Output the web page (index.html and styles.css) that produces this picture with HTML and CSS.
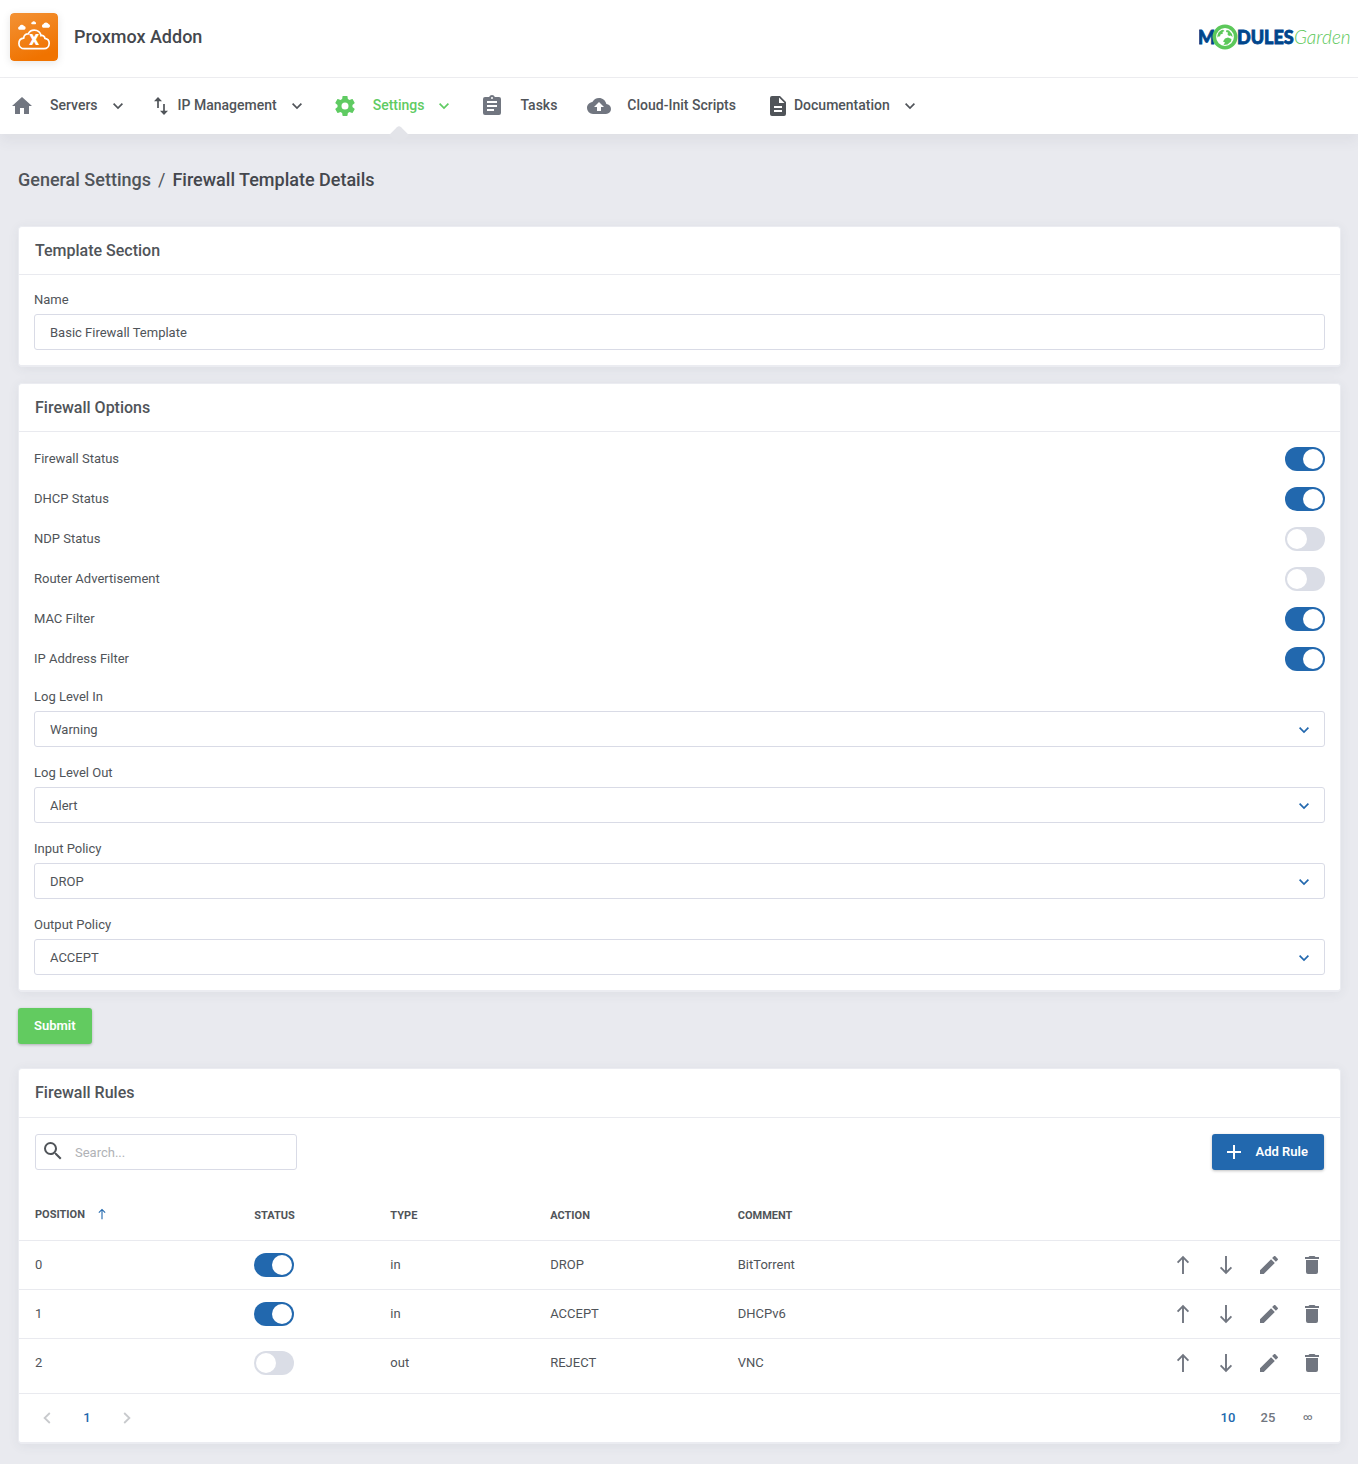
FILE: index.html
```html
<!DOCTYPE html>
<html lang="en">
<head>
    <meta charset="UTF-8">
    <meta name="viewport" content="width=device-width, initial-scale=1.0">
    <title>Proxmox Addon - Firewall Template Details</title>
    <link rel="stylesheet" href="styles.css">
</head>
<body>

<!-- icons used more than once -->
<svg class="sprite" aria-hidden="true">
    <symbol id="chevron" viewBox="0 0 12 12"><path d="M1.6 3.7L6 8L10.4 3.7" fill="none" stroke="currentColor" stroke-width="1.7"/></symbol>
    <symbol id="arrow-up" viewBox="0 0 24 24"><path d="M12 21V4.5M6.6 9.6L12 4.2L17.4 9.6" fill="none" stroke="currentColor" stroke-width="1.9"/></symbol>
    <symbol id="arrow-down" viewBox="0 0 24 24"><path d="M12 3V19.5M6.6 14.4L12 19.8L17.4 14.4" fill="none" stroke="currentColor" stroke-width="1.9"/></symbol>
    <symbol id="pencil" viewBox="0 0 24 24"><path d="M20.71,7.04C21.1,6.65 21.1,6 20.71,5.63L18.37,3.29C18,2.9 17.35,2.9 16.96,3.29L15.12,5.12L18.87,8.87M3,17.25V21H6.75L17.81,9.93L14.06,6.18L3,17.25Z"/></symbol>
    <symbol id="trash" viewBox="0 0 24 24"><path d="M19,4H15.5L14.5,3H9.5L8.5,4H5V6H19M6,19A2,2 0 0,0 8,21H16A2,2 0 0,0 18,19V7H6V19Z"/></symbol>
</svg>

<header class="top-bar">
    <svg class="app-icon" viewBox="0 0 48 48" aria-hidden="true">
        <defs>
            <linearGradient id="orange" x1="0" y1="0" x2="0.4" y2="1">
                <stop offset="0" stop-color="#f39235"/>
                <stop offset="1" stop-color="#f07300"/>
            </linearGradient>
        </defs>
        <rect width="48" height="48" rx="4" fill="url(#orange)"/>
        <path d="M14.5 35.7C11 35.7 8.9 33.2 8.9 30.4C8.9 27.6 10.9 25.4 13.7 25.1C13.8 22.4 15.8 20.7 18.2 20.9C19.4 18.4 21.6 17.1 24.2 17.1C27.8 17.1 30.5 19.6 31 22.6C32.6 22 34.8 23.2 34.9 25.3C37.4 25.7 39.2 27.8 39.2 30.3C39.2 33.3 37 35.7 34 35.7Z" fill="none" stroke="#fff" stroke-width="1.7"/>
        <path d="M9.4 16.8a1.7 1.7 0 0 1 0-3.3a2.5 2.5 0 0 1 4.6-.4a1.9 1.9 0 0 1 .3 3.7z" fill="#fff"/>
        <path d="M22.2 11.2a1 1 0 0 1 0-2a1.7 1.7 0 0 1 3.1-.1a1.1 1.1 0 0 1 0 2.1z" fill="#fff"/>
        <path d="M33.3 14.8a1.8 1.8 0 0 1 0-3.5a2.9 2.9 0 0 1 5.3-.3a2 2 0 0 1 .1 3.8z" fill="#fff"/>
        <text class="app-icon-letter" x="24" y="32" text-anchor="middle">x</text>
    </svg>
    <h1 class="app-title">Proxmox Addon</h1>
    <a class="brand" href="#" aria-label="ModulesGarden">
        <svg width="151" height="28" viewBox="0 0 151 28" aria-hidden="true">
            <text class="brand-bold" x="-1" y="21">M</text>
            <text class="brand-bold" x="38" y="21">DULES</text>
            <text class="brand-thin" x="95" y="21">Garden</text>
            <circle cx="26" cy="14" r="10.7" fill="#fff" stroke="#5cc85a" stroke-width="3.6"/>
            <path d="M18.5 14.5C18 10.5 20.5 7.5 24 6.8L25.5 8L23.5 9L24 10.5L21.5 11.5L21 13.5L19.8 13.2Z" fill="#5cc85a"/>
            <path d="M27.5 7L30 7.6L33 11L33.6 14L31.5 12.5L30 13L28.5 11.5L29 9.5L27 9Z" fill="#5cc85a"/>
            <path d="M26 15.5L29 14.5L32.5 16L32 18.5L28.5 21.6L24.5 22L26 19.5L24 18.5Z" fill="#5cc85a"/>
        </svg>
    </a>
</header>

<nav class="main-nav">
    <a class="nav-link" href="#">
        <svg class="icon nav-icon" viewBox="0 0 24 24"><path d="M10,20V14H14V20H19V12H22L12,3L2,12H5V20H10Z"/></svg>
        <span class="nav-text">Servers</span>
        <svg class="chevron"><use href="#chevron"/></svg>
    </a>
    <a class="nav-link nav-link-tight" href="#">
        <svg class="icon-ip" viewBox="0 0 20 24"><path d="M4 14V5M10 10V19" fill="none" stroke="currentColor" stroke-width="1.7"/><path d="M4 3L8 7.3H0ZM10 21L14 16.7H6Z"/></svg>
        <span class="nav-text">IP Management</span>
        <svg class="chevron"><use href="#chevron"/></svg>
    </a>
    <a class="nav-link active" href="#">
        <svg class="icon nav-icon" viewBox="0 0 24 24"><path d="M12,15.5A3.5,3.5 0 0,1 8.5,12A3.5,3.5 0 0,1 12,8.5A3.5,3.5 0 0,1 15.5,12A3.5,3.5 0 0,1 12,15.5M19.43,12.97C19.47,12.65 19.5,12.33 19.5,12C19.5,11.67 19.47,11.34 19.43,11L21.54,9.37C21.73,9.22 21.78,8.95 21.66,8.73L19.66,5.27C19.54,5.05 19.27,4.96 19.05,5.05L16.56,6.05C16.04,5.66 15.5,5.32 14.87,5.07L14.5,2.42C14.46,2.18 14.25,2 14,2H10C9.75,2 9.54,2.18 9.5,2.42L9.13,5.07C8.5,5.32 7.96,5.66 7.44,6.05L4.95,5.05C4.73,4.96 4.46,5.05 4.34,5.27L2.34,8.73C2.21,8.95 2.27,9.22 2.46,9.37L4.57,11C4.53,11.34 4.5,11.67 4.5,12C4.5,12.33 4.53,12.65 4.57,12.97L2.46,14.63C2.27,14.78 2.21,15.05 2.34,15.27L4.34,18.73C4.46,18.95 4.73,19.03 4.95,18.95L7.44,17.94C7.96,18.34 8.5,18.68 9.13,18.93L9.5,21.58C9.54,21.82 9.75,22 10,22H14C14.25,22 14.46,21.82 14.5,21.58L14.87,18.93C15.5,18.67 16.04,18.34 16.56,17.94L19.05,18.95C19.27,19.03 19.54,18.95 19.66,18.73L21.66,15.27C21.78,15.05 21.73,14.78 21.54,14.63L19.43,12.97Z"/></svg>
        <span class="nav-text nav-current">Settings</span>
        <svg class="chevron"><use href="#chevron"/></svg>
    </a>
    <a class="nav-link" href="#">
        <svg class="icon nav-icon" viewBox="0 0 24 24"><path d="M17,9H7V7H17M17,13H7V11H17M14,17H7V15H14M12,3A1,1 0 0,1 13,4A1,1 0 0,1 12,5A1,1 0 0,1 11,4A1,1 0 0,1 12,3M19,3H14.82C14.4,1.84 13.3,1 12,1C10.7,1 9.6,1.84 9.18,3H5A2,2 0 0,0 3,5V19A2,2 0 0,0 5,21H19A2,2 0 0,0 21,19V5A2,2 0 0,0 19,3Z"/></svg>
        <span class="nav-text">Tasks</span>
    </a>
    <a class="nav-link" href="#">
        <svg class="icon nav-icon" viewBox="0 0 24 24"><path d="M14,13V17H10V13H7L12,8L17,13M19.35,10.03C18.67,6.59 15.64,4 12,4C9.11,4 6.6,5.64 5.35,8.03C2.34,8.36 0,10.9 0,14A6,6 0 0,0 6,20H19A5,5 0 0,0 24,15C24,12.36 21.95,10.22 19.35,10.03Z"/></svg>
        <span class="nav-text">Cloud-Init Scripts</span>
    </a>
    <a class="nav-link nav-link-tight" href="#">
        <svg class="nav-icon" viewBox="0 0 24 24"><path d="M6,2A2,2 0 0,0 4,4V20A2,2 0 0,0 6,22H18A2,2 0 0,0 20,20V8L14,2H6M13,3.5L18.5,9H13V3.5M16,14H8V12H16V14M16,18H8V16H16V18Z" fill-rule="evenodd"/></svg>
        <span class="nav-text">Documentation</span>
        <svg class="chevron"><use href="#chevron"/></svg>
    </a>
</nav>

<main class="content">
    <div class="breadcrumb">
        <a href="#">General Settings</a>
        <span class="slash">/</span>
        <span class="current">Firewall Template Details</span>
    </div>

    <form class="template-form">
        <section class="card">
            <h2 class="card-title">Template Section</h2>
            <div class="card-body">
                <div class="field">
                    <label for="name">Name</label>
                    <input class="control" type="text" id="name" value="Basic Firewall Template">
                </div>
            </div>
        </section>

        <section class="card">
            <h2 class="card-title">Firewall Options</h2>
            <div class="card-body">
                <div class="switch-row">
                    <label for="firewall">Firewall Status</label>
                    <input class="switch" type="checkbox" id="firewall" checked>
                </div>
                <div class="switch-row">
                    <label for="dhcp">DHCP Status</label>
                    <input class="switch" type="checkbox" id="dhcp" checked>
                </div>
                <div class="switch-row">
                    <label for="ndp">NDP Status</label>
                    <input class="switch" type="checkbox" id="ndp">
                </div>
                <div class="switch-row">
                    <label for="radv">Router Advertisement</label>
                    <input class="switch" type="checkbox" id="radv">
                </div>
                <div class="switch-row">
                    <label for="mac">MAC Filter</label>
                    <input class="switch" type="checkbox" id="mac" checked>
                </div>
                <div class="switch-row">
                    <label for="ipfilter">IP Address Filter</label>
                    <input class="switch" type="checkbox" id="ipfilter" checked>
                </div>
                <div class="field">
                    <label for="log-in">Log Level In</label>
                    <div class="select-wrap">
                        <select class="control" id="log-in"><option>Warning</option></select>
                        <svg class="chevron"><use href="#chevron"/></svg>
                    </div>
                </div>
                <div class="field">
                    <label for="log-out">Log Level Out</label>
                    <div class="select-wrap">
                        <select class="control" id="log-out"><option>Alert</option></select>
                        <svg class="chevron"><use href="#chevron"/></svg>
                    </div>
                </div>
                <div class="field">
                    <label for="policy-in">Input Policy</label>
                    <div class="select-wrap">
                        <select class="control" id="policy-in"><option>DROP</option><option>ACCEPT</option><option>REJECT</option></select>
                        <svg class="chevron"><use href="#chevron"/></svg>
                    </div>
                </div>
                <div class="field">
                    <label for="policy-out">Output Policy</label>
                    <div class="select-wrap">
                        <select class="control" id="policy-out"><option>ACCEPT</option><option>DROP</option><option>REJECT</option></select>
                        <svg class="chevron"><use href="#chevron"/></svg>
                    </div>
                </div>
            </div>
        </section>

        <button class="btn btn-green" type="submit">Submit</button>
    </form>

    <section class="card">
        <h2 class="card-title rules-title">Firewall Rules</h2>
        <div class="toolbar">
            <div class="search">
                <svg class="icon-search" viewBox="0 0 24 24"><path d="M9.5,3A6.5,6.5 0 0,1 16,9.5C16,11.11 15.41,12.59 14.44,13.73L14.71,14H15.5L20.5,19L19,20.5L14,15.5V14.71L13.73,14.44C12.59,15.41 11.11,16 9.5,16A6.5,6.5 0 0,1 3,9.5A6.5,6.5 0 0,1 9.5,3M9.5,5C7,5 5,7 5,9.5C5,12 7,14 9.5,14C12,14 14,12 14,9.5C14,7 12,5 9.5,5Z"/></svg>
                <input type="text" placeholder="Search..." aria-label="Search rules">
            </div>
            <button class="btn btn-blue" type="button">
                <svg width="24" height="24" viewBox="0 0 24 24"><path d="M12 5V19M5 12H19" stroke="currentColor" stroke-width="2"/></svg>
                Add Rule
            </button>
        </div>

        <table class="rules">
            <thead>
                <tr>
                    <th class="col-position">Position <svg class="sort"><use href="#arrow-up"/></svg></th>
                    <th class="col-status">Status</th>
                    <th class="col-type">Type</th>
                    <th class="col-action">Action</th>
                    <th>Comment</th>
                    <th></th>
                </tr>
            </thead>
            <tbody>
                <tr>
                    <td>0</td>
                    <td><input class="switch" type="checkbox" aria-label="Rule 0 status" checked></td>
                    <td>in</td>
                    <td>DROP</td>
                    <td>BitTorrent</td>
                    <td>
                        <div class="row-buttons">
                            <button type="button" aria-label="Move up"><svg><use href="#arrow-up"/></svg></button>
                            <button type="button" aria-label="Move down"><svg><use href="#arrow-down"/></svg></button>
                            <button type="button" aria-label="Edit"><svg><use href="#pencil"/></svg></button>
                            <button type="button" aria-label="Delete"><svg><use href="#trash"/></svg></button>
                        </div>
                    </td>
                </tr>
                <tr>
                    <td>1</td>
                    <td><input class="switch" type="checkbox" aria-label="Rule 1 status" checked></td>
                    <td>in</td>
                    <td>ACCEPT</td>
                    <td>DHCPv6</td>
                    <td>
                        <div class="row-buttons">
                            <button type="button" aria-label="Move up"><svg><use href="#arrow-up"/></svg></button>
                            <button type="button" aria-label="Move down"><svg><use href="#arrow-down"/></svg></button>
                            <button type="button" aria-label="Edit"><svg><use href="#pencil"/></svg></button>
                            <button type="button" aria-label="Delete"><svg><use href="#trash"/></svg></button>
                        </div>
                    </td>
                </tr>
                <tr>
                    <td>2</td>
                    <td><input class="switch" type="checkbox" aria-label="Rule 2 status"></td>
                    <td>out</td>
                    <td>REJECT</td>
                    <td>VNC</td>
                    <td>
                        <div class="row-buttons">
                            <button type="button" aria-label="Move up"><svg><use href="#arrow-up"/></svg></button>
                            <button type="button" aria-label="Move down"><svg><use href="#arrow-down"/></svg></button>
                            <button type="button" aria-label="Edit"><svg><use href="#pencil"/></svg></button>
                            <button type="button" aria-label="Delete"><svg><use href="#trash"/></svg></button>
                        </div>
                    </td>
                </tr>
            </tbody>
        </table>

        <div class="table-footer">
            <div class="pages">
                <button type="button" aria-label="Previous page" disabled><svg width="16" height="16" viewBox="0 0 16 16"><path d="M10.8 3L5.6 8L10.8 13" fill="none" stroke="currentColor" stroke-width="1.8"/></svg></button>
                <button class="selected" type="button">1</button>
                <button type="button" aria-label="Next page" disabled><svg width="16" height="16" viewBox="0 0 16 16"><path d="M5.2 3L10.4 8L5.2 13" fill="none" stroke="currentColor" stroke-width="1.8"/></svg></button>
            </div>
            <div class="pages">
                <button class="selected" type="button">10</button>
                <button type="button">25</button>
                <button class="infinite" type="button">∞</button>
            </div>
        </div>
    </section>
</main>

</body>
</html>
```
FILE: styles.css
```css
* {
    box-sizing: border-box;
}

body {
    margin: 0;
    background-color: #e9eaef;
    color: #505459;
    font-family: Roboto, sans-serif;
    font-size: 13px;
    line-height: 20px;
}

a {
    color: inherit;
    text-decoration: none;
}

h1, h2 {
    margin: 0;
    font-weight: 500;
}

input, select, button {
    margin: 0;
    color: inherit;
    font: inherit;
}

button {
    padding: 0;
    border: none;
    background: none;
    cursor: pointer;
}

svg {
    display: block;
    flex: none;
    fill: currentColor;
}

.sprite {
    position: absolute;
    width: 0;
    height: 0;
}

.chevron {
    width: 12px;
    height: 12px;
}

/* header */
.top-bar {
    display: flex;
    align-items: center;
    padding: 13px 8px 16px 10px;
    border-bottom: 1px solid #ededf0;
    background-color: white;
}

.app-icon {
    width: 48px;
    height: 48px;
    border-radius: 4px;
    box-shadow: 0 2px 8px rgba(0, 0, 0, 0.1);
}

.app-icon-letter {
    fill: white;
    font-size: 20px;
    font-weight: 700;
}

.app-title {
    margin-left: 16px;
    color: #44474d;
    font-size: 18px;
}

.brand {
    margin-left: auto;
}

.brand-bold {
    fill: #00468c;
    stroke: #00468c;
    stroke-width: 0.8;
    font-family: Lato, sans-serif;
    font-size: 18px;
    font-weight: 900;
}

.brand-thin {
    fill: #5cc85a;
    font-family: Lato, sans-serif;
    font-size: 19px;
    font-style: italic;
    font-weight: 300;
}

/* navigation */
.main-nav {
    display: flex;
    gap: 30px;
    height: 56px;
    padding: 0 10px;
    background-color: white;
    box-shadow: 0 8px 12px rgba(60, 64, 80, 0.06);
}

.nav-link {
    display: flex;
    align-items: center;
    gap: 16px;
    font-size: 14px;
    font-weight: 500;
    white-space: nowrap;
}

.nav-link-tight {
    gap: 4px;
}

.nav-link .chevron {
    margin-left: -2px;
}

.nav-link-tight .chevron {
    margin-left: 10px;
}

.nav-text {
    padding-bottom: 2px;
    line-height: 54px;
}

.nav-icon {
    width: 24px;
    height: 24px;
}

.icon {
    color: #717680;
}

.icon-ip {
    width: 20px;
    height: 24px;
}

.active, .active .icon {
    color: #5fcb62;
}

.nav-current {
    position: relative;
}

.nav-current::after {
    content: "";
    position: absolute;
    bottom: -8px;
    left: 50%;
    width: 14px;
    height: 14px;
    margin-left: -7px;
    border-radius: 3px 0;
    background-color: #e3e4e9;
    transform: rotate(45deg);
}

/* page */
.content {
    padding: 0 17px 20px 18px;
}

.breadcrumb {
    display: flex;
    gap: 7px;
    padding: 36px 0;
    font-size: 18px;
    font-weight: 500;
}

.breadcrumb .slash {
    font-weight: 400;
}

.breadcrumb .current {
    color: #44474d;
}

.template-form {
    display: flex;
    flex-direction: column;
    align-items: flex-start;
    gap: 16px;
    margin-bottom: 24px;
}

.card {
    width: 100%;
    border: 1px solid #ebecf1;
    border-bottom-width: 2px;
    border-radius: 4px;
    background-color: white;
    box-shadow: 0 2px 12px rgba(60, 64, 80, 0.07);
}

.card-title {
    padding: 0 16px;
    border-bottom: 1px solid #e9eaef;
    font-size: 16px;
    line-height: 47px;
}

.rules-title {
    line-height: 48px;
}

.card-body {
    display: flex;
    flex-direction: column;
    gap: 16px;
    padding: 15px;
}

.field {
    display: flex;
    flex-direction: column;
    gap: 4px;
}

.control {
    width: 100%;
    height: 36px;
    padding: 0 15px;
    border: 1px solid #d9dbe6;
    border-radius: 3px;
    background-color: white;
    appearance: none;
}

select.control {
    padding-top: 2px;
}

.select-wrap {
    position: relative;
}

.select-wrap .chevron {
    position: absolute;
    top: 13px;
    right: 15px;
    color: #2268ae;
    pointer-events: none;
}

.switch-row {
    display: flex;
    align-items: center;
    justify-content: space-between;
}

.switch {
    display: block;
    width: 40px;
    height: 24px;
    padding: 2px;
    border-radius: 12px;
    background-color: #dadde6;
    appearance: none;
    cursor: pointer;
}

.switch::before {
    content: "";
    display: block;
    width: 20px;
    height: 20px;
    border-radius: 50%;
    background-color: white;
}

.switch:checked {
    background-color: #2268ae;
}

.switch:checked::before {
    margin-left: auto;
}

.btn {
    display: flex;
    align-items: center;
    gap: 10px;
    height: 36px;
    padding: 0 16px;
    border-radius: 3px;
    color: white;
    font-weight: 600;
    box-shadow: 0 1px 3px rgba(0, 0, 0, 0.25);
}

.btn-green {
    background-color: #62cb60;
}

.btn-blue {
    padding-left: 10px;
    background-color: #2268ae;
}

/* rules table */
.toolbar {
    display: flex;
    justify-content: space-between;
    padding: 16px 16px 21px;
}

.search {
    display: flex;
    align-items: center;
    gap: 10px;
    width: 262px;
    height: 36px;
    padding: 0 5px;
    border: 1px solid #d9dbe6;
    border-radius: 3px;
}

.icon-search {
    width: 24px;
    height: 24px;
    margin-bottom: 2px;
}

.search input {
    flex: 1;
    min-width: 0;
    padding: 2px 0 0;
    border: none;
    outline: none;
}

.search input::placeholder {
    color: #b0b2b6;
}

.rules {
    width: 100%;
    border-collapse: collapse;
    table-layout: fixed;
}

.rules th, .rules td {
    height: 49px;
    padding: 0 16px;
    border-bottom: 1px solid #e9eaef;
    text-align: left;
}

.rules tbody tr:last-child td {
    height: 55px;
    padding-bottom: 6px;
}

.rules th {
    padding-top: 2px;
    font-size: 11px;
    font-weight: 700;
    text-transform: uppercase;
}

.rules .col-position {
    width: 16.6%;
    padding-top: 0;
}

.col-status {
    width: 10.3%;
}

.col-type {
    width: 12.1%;
}

.col-action {
    width: 14.2%;
}

.sort {
    display: inline-block;
    width: 14px;
    height: 14px;
    margin-left: 7px;
    color: #2268ae;
    vertical-align: text-bottom;
}

.row-buttons {
    display: flex;
    justify-content: flex-end;
    gap: 19px;
    color: #717680;
}

.row-buttons svg {
    width: 24px;
    height: 24px;
}

.table-footer {
    display: flex;
    justify-content: space-between;
    padding: 12px 20px 12px 16px;
}

.pages {
    display: flex;
    gap: 16px;
}

.pages button {
    display: flex;
    align-items: center;
    justify-content: center;
    width: 24px;
    height: 24px;
    color: #717680;
    font-weight: 500;
}

.pages button:disabled {
    color: #c8cacd;
}

.pages .selected {
    color: #2268ae;
}

.pages .infinite {
    padding-bottom: 2px;
    font-size: 9px;
}
```
